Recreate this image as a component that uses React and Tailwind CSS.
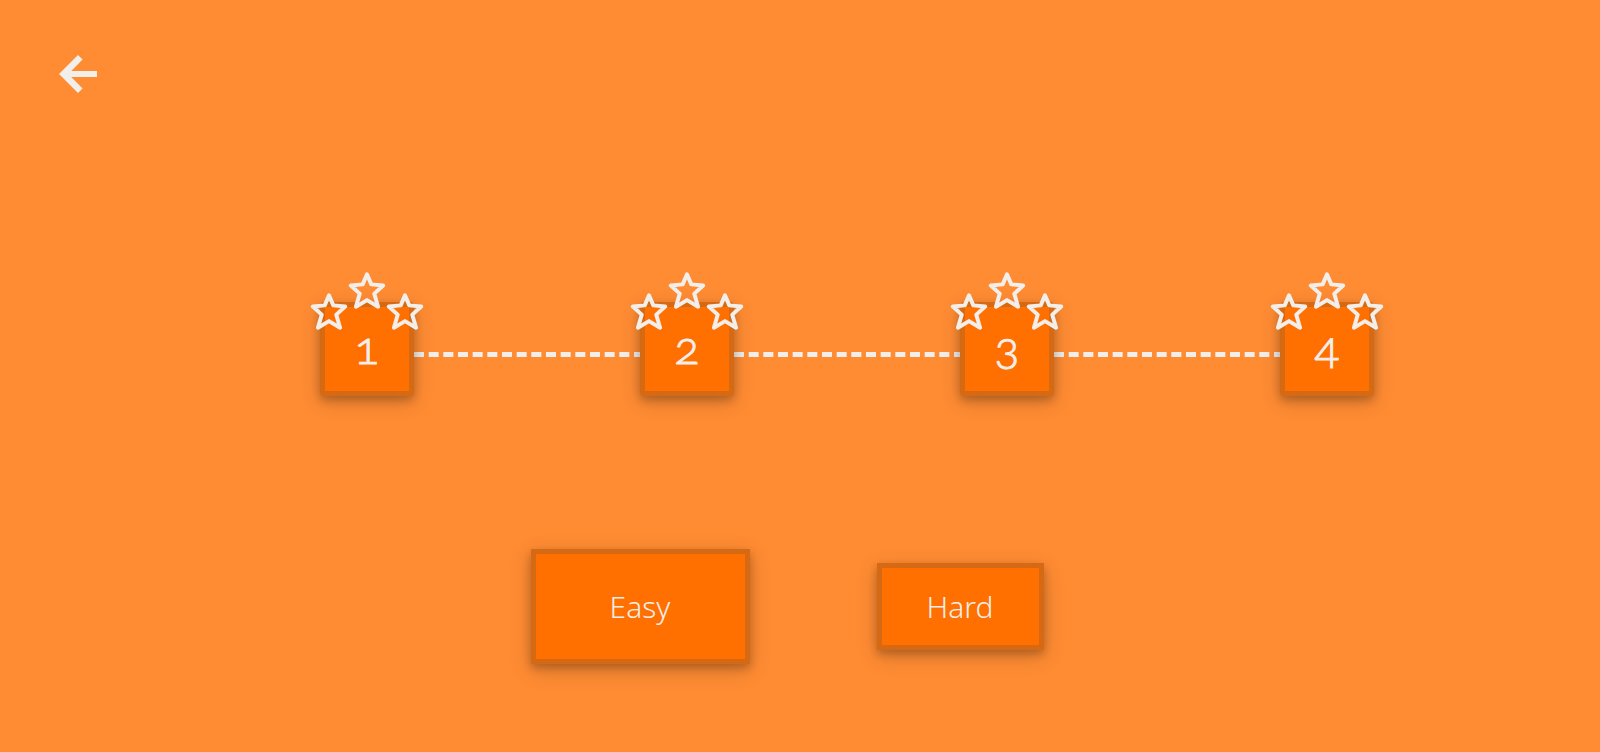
const SURFACE =
  "border-[5px] border-[#d66a14] bg-[#ff7000] shadow-[0_4px_8px_0_rgba(0,0,0,0.2),0_6px_20px_0_rgba(0,0,0,0.19)]";

function BackArrow() {
  return (
    <svg viewBox="58 46 113 113" className="h-[38px] w-[38px]" fill="currentColor" aria-hidden="true">
      <path d="M58 102.500L114.500 46L128 59.500L94.500 93.500H171V111.500H94.500L128 145.500L114.500 159Z" />
    </svg>
  );
}

function Star({ className }) {
  return (
    <svg
      viewBox="9 12 114 112"
      className={`h-[37px] w-[38px] ${className}`}
      fill="none"
      stroke="currentColor"
      strokeWidth="12"
      strokeLinejoin="round"
      aria-hidden="true"
    >
      <path d="M66 19L79 49.500L115 53L88 77.500L99.500 117L66 97L32.500 117L44 77.500L17 53L53 49.500Z" />
    </svg>
  );
}

function Level({ number, last }) {
  return (
    <li className="flex w-1/4 items-center">
      <button
        type="button"
        className={`relative flex h-[94px] w-[94px] shrink-0 items-center justify-center rounded-sm pb-1 text-[46px] leading-none font-light [-webkit-text-stroke:1px_#f2eeea] ${SURFACE}`}
      >
        {number}
        <span className="absolute -top-[35px] left-1/2 flex -translate-x-1/2">
          <Star className="mt-[21px]" />
          <Star className="" />
          <Star className="mt-[21px]" />
        </span>
      </button>
      {!last && <span className="mt-2.5 -mr-1 flex-1 border-t-[5px] border-dashed border-[#f2eeea]" />}
    </li>
  );
}

export default function App() {
  return (
    <main className="min-h-screen bg-[#ff8c33] pb-[88px] text-[#f2eeea]">
      <header className="px-[59px] pt-[55px]">
        <button type="button" aria-label="Back" className="block">
          <BackArrow />
        </button>
      </header>
      <ol className="mt-[209px] ml-[20%] flex font-['Lato',sans-serif] [font-feature-settings:'onum']">
        {[1, 2, 3, 4].map((n) => (
          <Level key={n} number={n} last={n === 4} />
        ))}
      </ol>
      <div className="mx-auto mt-[153px] grid w-2/5 grid-cols-2 items-center justify-items-center font-['Noto_Sans',sans-serif] text-[30px] leading-none font-light">
        <button type="button" className={`h-[115px] w-[219px] ${SURFACE}`}>
          Easy
        </button>
        <button type="button" className={`h-[87px] w-[167px] ${SURFACE}`}>
          Hard
        </button>
      </div>
    </main>
  );
}
